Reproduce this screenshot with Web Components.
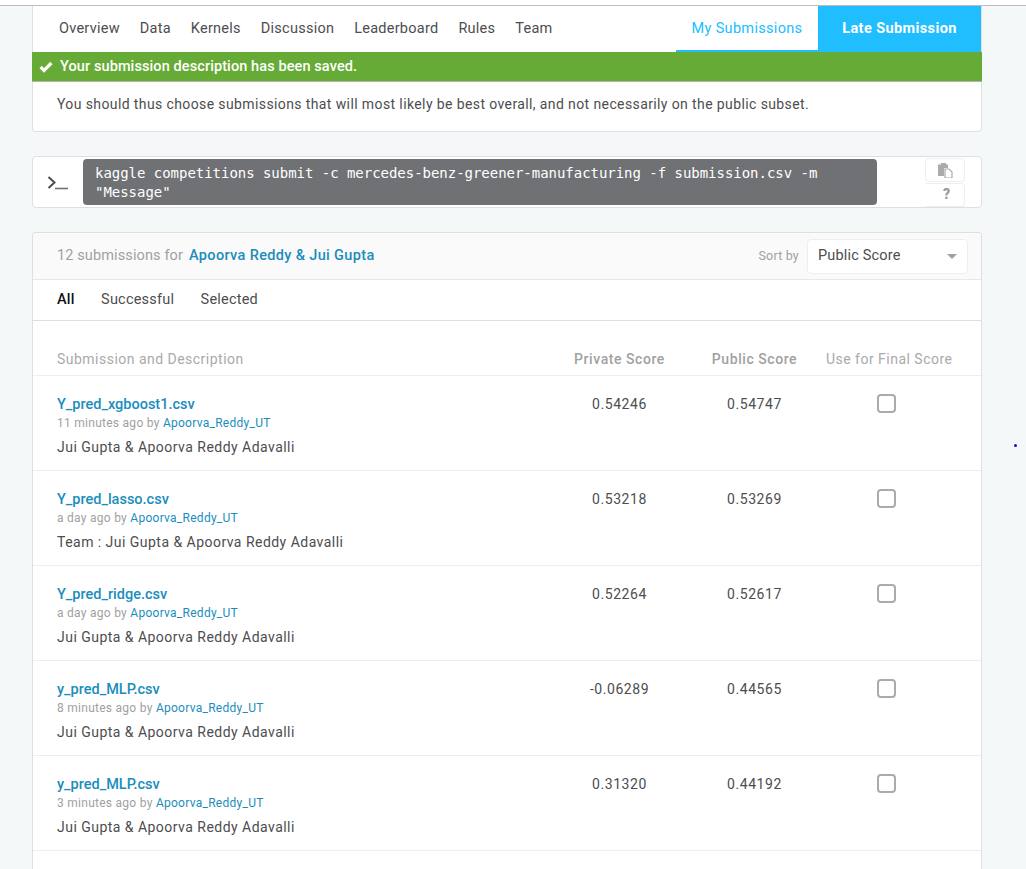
<!DOCTYPE html>
<html>
<head>
<meta charset="utf-8">
<title>My Submissions</title>
<style>
  html, body { margin: 0; padding: 0; }
  body {
    height: 869px;
    overflow: hidden;
    background: #fff;
    font-family: Roboto, "Liberation Sans", sans-serif;
    color: #4d4d4f;
  }
  .page { height: 864px; box-sizing: border-box; display: flex; flex-direction: column; padding: 0 44px 0 32px; border-top: 1px solid #bdbdbd; margin-top: 5px; background: #f5f8f9; }
  .dot { position: absolute; left: 1014px; top: 444px; width: 3px; height: 3px; border-radius: 50%; background: #1010d8; }
</style>
</head>
<body>
<div class="page">
  <comp-nav></comp-nav>
  <comp-notice>You should thus choose submissions that will most likely be best overall, and not necessarily on the public subset.</comp-notice>
  <comp-cli>kaggle competitions submit -c mercedes-benz-greener-manufacturing -f submission.csv -m "Message"</comp-cli>
  <submission-list>
    <submission-row file="Y_pred_xgboost1.csv" ago="11 minutes ago" user="Apoorva_Reddy_UT" private="0.54246" public="0.54747">Jui Gupta &amp; Apoorva Reddy Adavalli</submission-row>
    <submission-row file="Y_pred_lasso.csv" ago="a day ago" user="Apoorva_Reddy_UT" private="0.53218" public="0.53269">Team : Jui Gupta &amp; Apoorva Reddy Adavalli</submission-row>
    <submission-row file="Y_pred_ridge.csv" ago="a day ago" user="Apoorva_Reddy_UT" private="0.52264" public="0.52617">Jui Gupta &amp; Apoorva Reddy Adavalli</submission-row>
    <submission-row file="y_pred_MLP.csv" ago="8 minutes ago" user="Apoorva_Reddy_UT" private="-0.06289" public="0.44565">Jui Gupta &amp; Apoorva Reddy Adavalli</submission-row>
    <submission-row file="y_pred_MLP.csv" ago="3 minutes ago" user="Apoorva_Reddy_UT" private="0.31320" public="0.44192">Jui Gupta &amp; Apoorva Reddy Adavalli</submission-row>
  </submission-list>
</div>
<div class="dot"></div>

<script>
class CompNav extends HTMLElement {
  constructor() {
    super();
    this.attachShadow({mode: 'open'}).innerHTML = `
      <style>
        :host { display: flex; flex: none; height: 46px; background: #fff; font-size: 14.5px; letter-spacing: .25px; border-left: 1px solid #dedfe0; border-right: 1px solid #dedfe0; box-sizing: border-box; }
        .links { display: flex; flex: 1; align-items: center; gap: 20px; padding-left: 26px; padding-bottom: 2px; }
        .links a { color: #4d4d4f; }
        .mine { width: 142px; box-sizing: border-box; display: flex; align-items: center; justify-content: center; color: #20beff; letter-spacing: .32px; border-bottom: 2px solid #20beff; }
        .late { width: 163px; display: flex; align-items: center; justify-content: center; color: #fff; background: #20beff; font-weight: 700; letter-spacing: .4px; padding-bottom: 2px; box-sizing: border-box; }
      </style>
      <div class="links">
        <a>Overview</a><a>Data</a><a>Kernels</a><a>Discussion</a><a>Leaderboard</a><a>Rules</a><a>Team</a>
      </div>
      <div class="mine">My Submissions</div>
      <div class="late">Late Submission</div>`;
  }
}
customElements.define('comp-nav', CompNav);

class CompNotice extends HTMLElement {
  constructor() {
    super();
    this.attachShadow({mode: 'open'}).innerHTML = `
      <style>
        :host { display: block; flex: none; }
        .saved { display: flex; align-items: center; gap: 7px; height: 30px; padding-left: 7px; box-sizing: border-box; background: #66ab35; color: #fff; font-size: 14.5px; font-weight: 500; letter-spacing: .1px; border-bottom: 1px solid #b0b5a8; }
        .text { height: 50px; box-sizing: border-box; padding: 13px 24px 0; background: #fff; border: 1px solid #dedfe0; border-top: 0; border-radius: 0 0 4px 4px; font-size: 14px; line-height: 18px; letter-spacing: .39px; color: #4d4d4f; }
        svg { display: block; }
      </style>
      <div class="saved">
        <svg width="14" height="12" viewBox="0 0 14 12"><path d="M1.6 6 5 9.4 12.4 2" fill="none" stroke="#fff" stroke-width="3.2"/></svg>
        <span>Your submission description has been saved.</span>
      </div>
      <div class="text"><slot></slot></div>`;
  }
}
customElements.define('comp-notice', CompNotice);

class CompCli extends HTMLElement {
  constructor() {
    super();
    this.attachShadow({mode: 'open'}).innerHTML = `
      <style>
        :host { display: flex; flex: none; margin-top: 24px; height: 52px; box-sizing: border-box; background: #fff; border: 1px solid #dedfe0; border-radius: 4px; }
        .prompt { width: 50px; display: flex; align-items: center; justify-content: center; flex: none; }
        code { display: block; width: 794px; flex: none; box-sizing: border-box; margin-top: 2px; height: 46px; padding: 5px 12px; background: #707174; color: #fff; border-radius: 4px; font: 14px/19px "DejaVu Sans Mono", "Liberation Mono", monospace; letter-spacing: -.03px; }
        .tools { margin-left: 48px; margin-top: 1px; display: flex; flex-direction: column; width: 40px; }
        .tool { height: 24px; display: flex; align-items: center; justify-content: center; box-sizing: border-box; border: 1px solid #eeeeee; border-radius: 4px; color: #9a9b9d; font-size: 14px; font-weight: 900; }
        .help { border-left-color: transparent; border-bottom-left-radius: 0; border-top-left-radius: 0; margin-top: 1px; padding: 0 0 2px 3px; }
      </style>
      <div class="prompt">
        <svg width="22" height="16" viewBox="0 0 22 16"><path d="M1.5 3 7.5 8.5 1.5 14" fill="none" stroke="#4d4d4f" stroke-width="2"/><path d="M8 14.5h13" stroke="#707174" stroke-width="1.6"/></svg>
      </div>
      <code><slot></slot></code>
      <div class="tools">
        <div class="tool">
          <svg width="15" height="15" viewBox="0 0 15 15"><path d="M0 1.5h3V0h5v1.5h2V5H6v8H0z" fill="#aaabad"/><path d="M7 6h4l3 3v6H7z" fill="#fff" stroke="#aaabad" stroke-width="1.2"/></svg>
        </div>
        <div class="tool help">?</div>
      </div>`;
  }
}
customElements.define('comp-cli', CompCli);

class SubmissionList extends HTMLElement {
  constructor() {
    super();
    this.attachShadow({mode: 'open'}).innerHTML = `
      <style>
        :host { display: block; flex: 1; margin-top: 24px; background: #fff; border: 1px solid #dedfe0; border-bottom: 0; border-radius: 4px 4px 0 0; font-size: 14px; }
        .head { height: 47px; box-sizing: border-box; display: flex; align-items: center; padding: 0 13px 2px 24px; background: #fafafa; border-bottom: 1px solid #e8e8e8; border-radius: 4px 4px 0 0; }
        .count { color: #a0a1a3; font-size: 14.5px; letter-spacing: .12px; }
        .team { margin-left: 6px; color: #1a8dbd; font-size: 14.5px; font-weight: 500; letter-spacing: .35px; }
        .sort { margin-left: auto; display: flex; align-items: center; gap: 8px; color: #a0a1a3; font-size: 12.5px; letter-spacing: .2px; }
        .select { width: 161px; height: 35px; box-sizing: border-box; display: flex; align-items: center; justify-content: space-between; padding: 0 10px 2px; background: #fff; border: 1px solid #eeeeee; border-radius: 4px; color: #4d4d4f; font-size: 14.5px; letter-spacing: .17px; margin-top: 2px; }
        .caret { width: 0; height: 0; margin-top: 2px; border-left: 5px solid transparent; border-right: 5px solid transparent; border-top: 5px solid #a0a1a3; }
        .tabs { height: 41px; box-sizing: border-box; display: flex; align-items: center; gap: 26.5px; padding: 0 0 2px 24px; border-bottom: 1px solid #dedfe0; color: #4d4d4f; font-size: 14.5px; letter-spacing: .2px; }
        .tabs b { font-weight: 500; color: #111; }
        .cols { height: 55px; box-sizing: border-box; display: grid; grid-template-columns: 1fr 135px 135px 128px; padding: 29px 31px 0 24px; border-bottom: 1px solid #eeeeee; color: #a9aaac; line-height: 18px; letter-spacing: .48px; }
        .cols div { text-align: center; white-space: nowrap; }
        .cols div:first-child { text-align: left; }
        .cols .strong { font-weight: 500; color: #a0a1a3; letter-spacing: .56px; }
        .cols .final { padding-left: 4px; text-align: left; }
      </style>
      <div class="head">
        <span class="count">12 submissions for</span>
        <span class="team">Apoorva Reddy &amp; Jui Gupta</span>
        <div class="sort">
          <span>Sort by</span>
          <div class="select"><span>Public Score</span><i class="caret"></i></div>
        </div>
      </div>
      <div class="tabs"><b>All</b><span>Successful</span><span>Selected</span></div>
      <div class="cols">
        <div>Submission and Description</div>
        <div class="strong">Private Score</div>
        <div class="strong">Public Score</div>
        <div class="final">Use for Final Score</div>
      </div>
      <slot></slot>`;
  }
}
customElements.define('submission-list', SubmissionList);

const rowTemplate = document.createElement('template');
rowTemplate.innerHTML = `
  <style>
    :host { display: grid; grid-template-columns: 1fr 135px 135px 128px; height: 95px; box-sizing: border-box; padding: 19px 31px 0 24px; border-bottom: 1px solid #eeeeee; font-size: 14px; color: #4d4d4f; }
    .file { display: block; color: #1a8dbd; font-weight: 500; font-size: 14.5px; line-height: 18px; margin-top: 1px; }
    .meta { font-size: 12px; line-height: 15px; margin-top: 2px; letter-spacing: .27px; color: #a0a1a3; }
    .meta a { color: #1a8dbd; }
    .desc { margin-top: 7px; line-height: 18px; letter-spacing: .47px; }
    .score { text-align: center; line-height: 18px; letter-spacing: .55px; }
    .check { justify-self: center; margin-top: -1px; width: 19px; height: 19px; box-sizing: border-box; border: 2px solid #aaabad; border-radius: 4px; background: #fff; }
  </style>
  <div>
    <a class="file" id="file"></a>
    <div class="meta"><span id="ago"></span> by <a id="user"></a></div>
    <div class="desc"><slot></slot></div>
  </div>
  <div class="score" id="private"></div>
  <div class="score" id="public"></div>
  <div class="check"></div>`;

class SubmissionRow extends HTMLElement {
  constructor() {
    super();
    this.attachShadow({mode: 'open'});
    this.shadowRoot.appendChild(rowTemplate.content.cloneNode(true));
    for (const key of ['file', 'ago', 'user', 'private', 'public']) {
      this.shadowRoot.getElementById(key).innerText = this.getAttribute(key);
    }
  }
}
customElements.define('submission-row', SubmissionRow);
</script>
</body>
</html>
